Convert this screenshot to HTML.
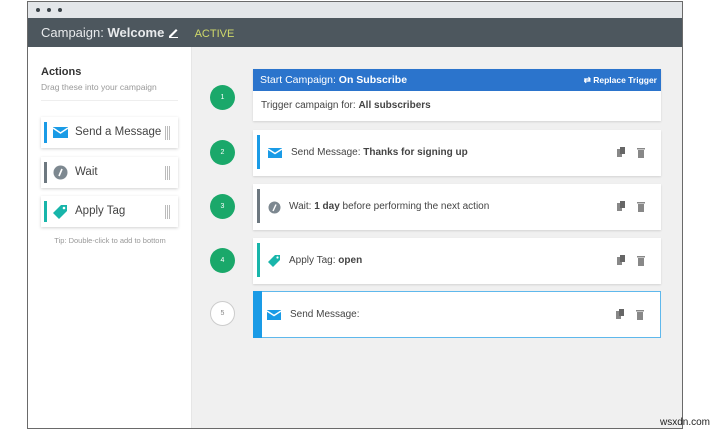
<!DOCTYPE html>
<html><head><style>
*{margin:0;padding:0;box-sizing:border-box}
body{width:712px;height:430px;background:#fff;font-family:"Liberation Sans",sans-serif;position:relative;overflow:hidden;color:#444}
.win{position:absolute;left:27px;top:1px;width:656px;height:428px;border:1px solid #6a6a6a;background:#f0f0f0;overflow:hidden}
.tb{position:absolute;left:0;top:0;right:0;height:16px;background:#e3e6e9}
.dot{position:absolute;top:6px;width:4px;height:4px;border-radius:50%;background:#3a4248}
.hd{position:absolute;left:0;top:16px;right:0;height:29px;background:#4d575e;color:#e8eaec;font-size:13px;line-height:29px;padding-left:13px}
.side{position:absolute;left:0;top:45px;width:164px;bottom:0;background:#fff;border-right:1px solid #e6e6e6}
.a{position:absolute;left:13px;width:137px;height:31px;background:#fff;box-shadow:0 1px 3px rgba(0,0,0,.18);font-size:11.5px;line-height:31px}
.a .bar{position:absolute;left:3px;top:5px;width:3px;height:21px}
.a .t{position:absolute;left:34px}
.a .g{position:absolute;right:8px;top:9px;width:5px;height:14px;border-left:1px solid #bbb;border-right:1px solid #bbb}
.a .g:after{content:"";position:absolute;left:1px;top:0;width:1px;height:14px;background:#bbb}
.c{position:absolute;left:225px;width:408px;background:#fff;box-shadow:0 1px 2px rgba(0,0,0,.12);font-size:10px}
.n{position:absolute;left:182px;width:25px;height:25px;border-radius:50%;background:#1aa86a;color:#fff;font-size:7px;text-align:center;line-height:25px}
.c .bar{position:absolute;left:4px;top:5px;width:3px;height:34px}
.c .t{position:absolute;left:38px;top:0;line-height:46px}
.ic{position:absolute;right:14px;top:17px}
</style></head><body>
<div class="win">
<div class="tb"><div class="dot" style="left:8px"></div><div class="dot" style="left:19px"></div><div class="dot" style="left:30px"></div></div>
<div class="hd">Campaign: <b>Welcome</b> <svg width="11" height="11" viewBox="0 0 11 11" style="vertical-align:-1px"><path d="M1 9 L8 2 L9.5 3.5 L2.5 10.5 L1 10.5Z" fill="#fff"/><rect x="1" y="10" width="9" height="1" fill="#fff"/></svg> <span style="color:#cfd96a;font-size:11px;margin-left:12px">ACTIVE</span></div>
<div class="side">
<div style="position:absolute;left:13px;top:19px;font-size:11px;font-weight:bold;color:#333">Actions</div>
<div style="position:absolute;left:13px;top:35px;font-size:8.5px;color:#999">Drag these into your campaign</div>
<div style="position:absolute;left:13px;top:53px;width:137px;height:1px;background:#eee"></div>
<div class="a" style="top:70px"><div class="bar" style="background:#1a9be6"></div><svg style="position:absolute;left:12px;top:10px" width="15" height="11"><rect width="15" height="11" fill="#1a9be6"/><path d="M0 1 L7.5 6 L15 1" stroke="#fff" stroke-width="1.5" fill="none"/></svg><span class="t">Send a Message</span><div class="g"></div></div>
<div class="a" style="top:110px"><div class="bar" style="background:#6d7880"></div><svg style="position:absolute;left:12px;top:8px" width="15" height="15"><circle cx="7.5" cy="7.5" r="7" fill="#7d8890"/><path d="M6 11 L9 4" stroke="#fff" stroke-width="1.6"/></svg><span class="t">Wait</span><div class="g"></div></div>
<div class="a" style="top:149px"><div class="bar" style="background:#18b5aa"></div><svg style="position:absolute;left:11px;top:8px" width="16" height="16"><path d="M9 1 L15 1 L15 7 L7 15 L1 9Z" fill="#18b5aa"/><circle cx="12" cy="4" r="1.3" fill="#fff"/></svg><span class="t">Apply Tag</span><div class="g"></div></div>
<div style="position:absolute;left:0;width:164px;top:189px;font-size:7.5px;color:#999;text-align:center">Tip: Double-click to add to bottom</div>
</div>
<div class="n" style="top:83px">1</div>
<div class="c" style="top:67px;height:52px"><div style="height:22px;background:#2b74cc;color:#fff;font-size:10.5px;line-height:22px;padding-left:7px">Start Campaign: <b>On Subscribe</b><span style="position:absolute;right:4px;font-size:8.5px;font-weight:bold">⇄ Replace Trigger</span></div><div style="padding-left:8px;line-height:30px">Trigger campaign for: <b>All subscribers</b></div></div>
<div class="n" style="top:138px">2</div>
<div class="c" style="top:128px;height:46px"><div class="bar" style="background:#1a9be6"></div><svg style="position:absolute;left:15px;top:18px" width="14" height="10"><rect width="14" height="10" fill="#1a9be6"/><path d="M0 1 L7 5.5 L14 1" stroke="#fff" stroke-width="1.4" fill="none"/></svg><span class="t">Send Message: <b>Thanks for signing up</b></span><span class="ic"><svg width="30" height="11"><rect x="0" y="2" width="5" height="8" fill="#888"/><rect x="3" y="0" width="5" height="7" fill="#666"/><rect x="20" y="1" width="8" height="1.5" fill="#888"/><rect x="21" y="3" width="6" height="8" fill="#888"/></svg></span></div>
<div class="n" style="top:192px">3</div>
<div class="c" style="top:182px;height:46px"><div class="bar" style="background:#6d7880"></div><svg style="position:absolute;left:15px;top:17px" width="13" height="13"><circle cx="6.5" cy="6.5" r="6" fill="#7d8890"/><path d="M5 10 L8 3.5" stroke="#fff" stroke-width="1.4"/></svg><span class="t" style="left:36px">Wait: <b>1 day</b> before performing the next action</span><span class="ic"><svg width="30" height="11"><rect x="0" y="2" width="5" height="8" fill="#888"/><rect x="3" y="0" width="5" height="7" fill="#666"/><rect x="20" y="1" width="8" height="1.5" fill="#888"/><rect x="21" y="3" width="6" height="8" fill="#888"/></svg></span></div>
<div class="n" style="top:246px">4</div>
<div class="c" style="top:236px;height:46px"><div class="bar" style="background:#18b5aa"></div><svg style="position:absolute;left:14px;top:16px" width="14" height="14"><path d="M8 1 L13 1 L13 6 L6 13 L1 8Z" fill="#18b5aa"/><circle cx="10.5" cy="3.5" r="1.1" fill="#fff"/></svg><span class="t" style="left:36px">Apply Tag: <b>open</b></span><span class="ic"><svg width="30" height="11"><rect x="0" y="2" width="5" height="8" fill="#888"/><rect x="3" y="0" width="5" height="7" fill="#666"/><rect x="20" y="1" width="8" height="1.5" fill="#888"/><rect x="21" y="3" width="6" height="8" fill="#888"/></svg></span></div>
<div class="n" style="top:299px;background:#fff;border:1px solid #ccc;color:#888;line-height:23px">5</div>
<div class="c" style="top:289px;height:47px;border:1px solid #5fb8ec;box-shadow:none"><div style="position:absolute;left:-1px;top:-1px;width:9px;height:47px;background:#1a9be6"></div><svg style="position:absolute;left:13px;top:18px" width="14" height="10"><rect width="14" height="10" fill="#1a9be6"/><path d="M0 1 L7 5.5 L14 1" stroke="#fff" stroke-width="1.4" fill="none"/></svg><span class="t" style="left:36px;line-height:45px">Send Message:</span><span class="ic"><svg width="30" height="11"><rect x="0" y="2" width="5" height="8" fill="#888"/><rect x="3" y="0" width="5" height="7" fill="#666"/><rect x="20" y="1" width="8" height="1.5" fill="#888"/><rect x="21" y="3" width="6" height="8" fill="#888"/></svg></span></div>
</div>
<div style="position:absolute;right:2px;bottom:2px;font-size:10px;color:#222">wsxdn.com</div>
</body></html>
